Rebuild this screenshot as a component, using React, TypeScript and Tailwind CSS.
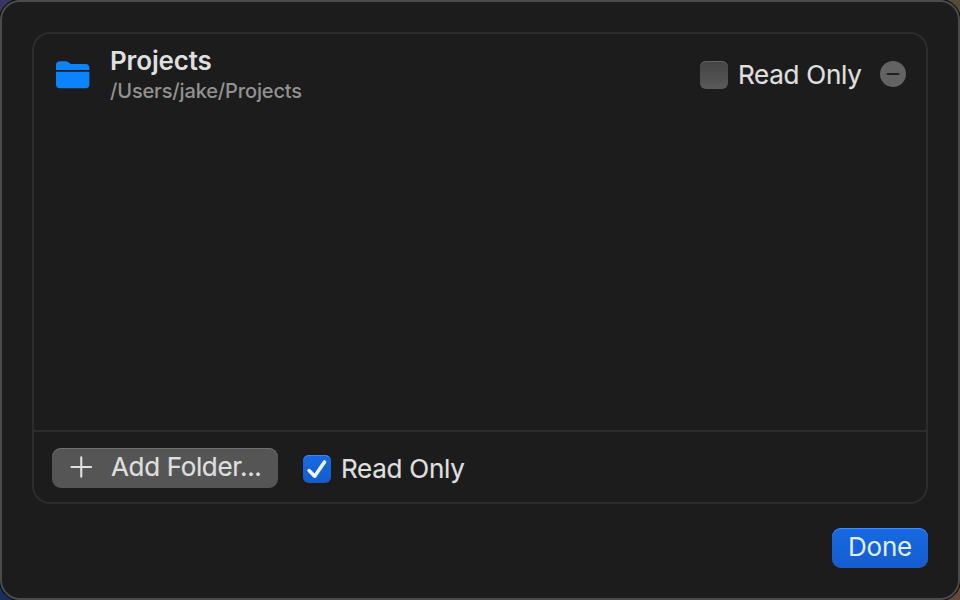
import type { ReactNode } from "react";

function FolderIcon() {
  return (
    <svg width="34" height="28" viewBox="0 0 34 28" fill="#0d82fd" className="block shrink-0">
      <path d="M0 9V4.2C0 1.6 1.4 0.2 4 0.2H9.2C10.7 0.2 11.6 0.6 12.5 1.3L13.4 2C14.2 2.7 14.9 3 16 3H29.5C32 3 33.4 4.4 33.4 7V9Z" />
      <path d="M0 10.8H33.4V23.4C33.4 25.9 32 27.2 29.5 27.2H4C1.4 27.2 0 25.9 0 23.4Z" />
    </svg>
  );
}

function Checkbox({ checked = false }: { checked?: boolean }) {
  return checked ? (
    <span className="flex size-7 shrink-0 rounded-[6px] bg-linear-to-b from-[#176be4] to-[#155bcb] shadow-[inset_0_1px_0_#4385e6]">
      <svg width="28" height="28" viewBox="0 0 28 28" fill="none" stroke="#eaf3ff" strokeWidth="3.6" strokeLinecap="round" strokeLinejoin="round">
        <path d="M6.1 15.6L11.7 21.2L21.5 6.9" />
      </svg>
    </span>
  ) : (
    <span className="size-7 shrink-0 rounded-[6px] bg-linear-to-b from-[#434343] to-[#5a5a5a] shadow-[inset_0_1px_0_#626262]" />
  );
}

function Option({ checked, children }: { checked?: boolean; children: ReactNode }) {
  return (
    <div className="flex items-center gap-[10px]">
      <Checkbox checked={checked} />
      <span className="w-[124px] whitespace-nowrap text-[26px] leading-7 tracking-[-0.25px] [-webkit-text-stroke:0.2px_currentColor]">{children}</span>
    </div>
  );
}

export default function App() {
  return (
    <div className="h-[600px] w-[960px] overflow-hidden bg-[conic-gradient(#554c3a_0deg_90deg,#65483a_90deg_180deg,#173057_180deg_270deg,#363761_270deg_360deg)] font-['Inter','Liberation_Sans',sans-serif] text-[#dfdfdf]">
      <div className="flex h-full flex-col rounded-[20px] border-2 border-[#4b4b4b] bg-[#1c1c1c] px-[30px] pt-[30px] shadow-[0_0_0_1px_#080808]">
        <section className="flex h-[472px] flex-col rounded-[18px] border-2 border-[#2c2c2c]">
          <div className="flex h-[396px] items-start pl-[22px] pr-5">
            <div className="pt-[27px]"><FolderIcon /></div>
            <div className="ml-5 pt-[11px]">
              <div className="text-[26px] font-semibold leading-8 tracking-[-0.15px]">Projects</div>
              <div className="text-[20px] leading-7 font-medium tracking-[-0.15px] text-[#929292]">/Users/jake/Projects</div>
            </div>
            <div className="ml-auto flex items-center gap-[18px] pt-[27px]">
              <Option>Read Only</Option>
              <svg width="26" height="26" viewBox="0 0 26 26" className="-mt-[2px] block">
                <circle cx="13" cy="13" r="13" fill="#636363" />
                <path d="M7.6 13H18.4" stroke="#212121" strokeWidth="2.1" strokeLinecap="round" />
              </svg>
            </div>
          </div>
          <div className="flex h-[72px] items-start gap-[25px] border-t-2 border-[#2c2c2c] pl-[18px] pt-4">
            <button className="flex h-10 w-[226px] items-center rounded-[9px] bg-[#555555] pl-[18px] shadow-[inset_0_1px_0_#707070]">
              <svg width="22" height="22" viewBox="0 0 22 22" stroke="#e2e2e2" strokeWidth="2.1" strokeLinecap="round" className="-mt-[2px] shrink-0">
                <path d="M1.5 11H21M11.25 1.25V20.75" />
              </svg>
              <span className="-mt-[2px] ml-[19px] whitespace-nowrap text-[26px] leading-8 tracking-[-0.35px] [-webkit-text-stroke:0.2px_currentColor]">Add Folder...</span>
            </button>
            <div className="pt-[7px]"><Option checked>Read Only</Option></div>
          </div>
        </section>
        <button className="mt-6 flex h-10 w-24 items-center justify-center self-end rounded-[9px] bg-linear-to-b from-[#1669e4] to-[#155dce] text-[#e2eeff] shadow-[inset_0_1px_0_#4b89e9]">
          <span className="-mt-[2px] text-[26px] leading-8 tracking-[-0.25px]">Done</span>
        </button>
      </div>
    </div>
  );
}
